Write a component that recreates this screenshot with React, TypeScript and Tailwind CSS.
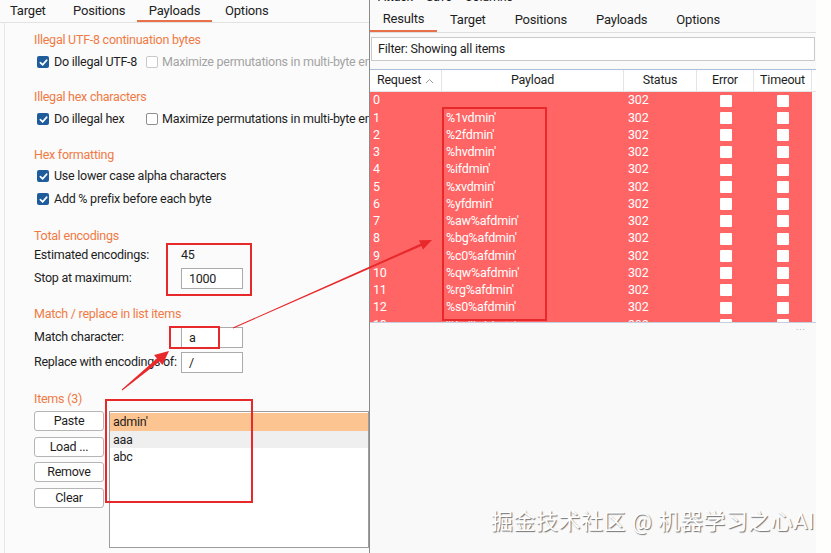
import React from 'react';

const FONT = 'Roboto, "Noto Sans CJK SC", sans-serif';

// Payload rows in the results table (row 13 is cut off at the bottom)
const rows = [
  '',
  "%1vdmin'",
  "%2fdmin'",
  "%hvdmin'",
  "%ifdmin'",
  "%xvdmin'",
  "%yfdmin'",
  "%aw%afdmin'",
  "%bg%afdmin'",
  "%c0%afdmin'",
  "%qw%afdmin'",
  "%rg%afdmin'",
  "%s0%afdmin'",
  "%tw%afdmin'",
];

const Check = ({ checked, disabled }: { checked?: boolean; disabled?: boolean }) =>
  checked ? (
    <div className="w-[12px] h-[12px] rounded-[2px] bg-[#1f5c9c] flex items-center justify-center shrink-0">
      <svg width="9" height="9" viewBox="0 0 10 10">
        <path d="M1.5 5.2 L4 7.6 L8.6 2.4" stroke="white" strokeWidth="1.8" fill="none" strokeLinecap="round" strokeLinejoin="round" />
      </svg>
    </div>
  ) : (
    <div
      className={`w-[12px] h-[12px] rounded-[2px] border bg-white shrink-0 ${
        disabled ? 'border-[#c9c9c9]' : 'border-[#8f8f8f]'
      }`}
    />
  );

const Heading = ({ children, mt }: { children: React.ReactNode; mt: string }) => (
  <div className={`${mt} h-[18px] leading-[18px] text-[12.5px] text-[#f07a45]`}>{children}</div>
);

const Field = ({ value }: { value: string }) => (
  <div className="w-[62px] h-[21px] shrink-0 border border-[#ababab] bg-white px-[7px] leading-[19px] text-[#222]">
    {value}
  </div>
);

// tapered arrow as one polygon: thin at the tail, arrow head at the tip
const arrow = (x1: number, y1: number, x2: number, y2: number, w0: number, w1: number, hl: number, hw: number) => {
  const dx = x2 - x1;
  const dy = y2 - y1;
  const len = Math.hypot(dx, dy);
  const ux = dx / len;
  const uy = dy / len;
  const nx = -uy;
  const ny = ux;
  const bx = x2 - ux * hl;
  const by = y2 - uy * hl;
  const p = [
    [x1 + nx * w0 / 2, y1 + ny * w0 / 2],
    [bx + nx * w1 / 2, by + ny * w1 / 2],
    [bx + nx * hw, by + ny * hw],
    [x2, y2],
    [bx - nx * hw, by - ny * hw],
    [bx - nx * w1 / 2, by - ny * w1 / 2],
    [x1 - nx * w0 / 2, y1 - ny * w0 / 2],
  ];
  return p.map((q) => q.map((v) => v.toFixed(1)).join(',')).join(' ');
};

const LeftPane = () => (
  <div className="w-[369px] shrink-0 bg-[#fbfbfb] flex flex-col">
    {/* Tabs */}
    <div className="h-[23px] flex items-stretch border-b border-[#e2e2e2] text-[13px] tracking-[-0.2px] text-[#222]">
      <div className="w-[62px] pl-[10px] leading-[21px]">Target</div>
      <div className="w-[75px] pl-[11px] leading-[21px]">Positions</div>
      <div className="w-[75px] text-center leading-[21px] border-b-2 border-[#e8704a]">Payloads</div>
      <div className="pl-[13px] leading-[21px]">Options</div>
    </div>

    <div className="flex-1 ml-[4px] border-l border-[#e6e6e6] pl-[29px] text-[12.5px] tracking-[-0.25px] text-[#1e1e1e] whitespace-nowrap">
      <Heading mt="mt-[8px]">Illegal UTF-8 continuation bytes</Heading>
      <div className="mt-[3px] h-[20px] flex items-center overflow-hidden">
        <div className="w-[112px] shrink-0 pl-[3px] flex items-center gap-[5px]">
          <Check checked />
          <span>Do illegal UTF-8</span>
        </div>
        <div className="flex items-center gap-[4px] text-[#a3a3a3]">
          <Check disabled />
          <span>Maximize permutations in multi-byte encodings</span>
        </div>
      </div>

      <Heading mt="mt-[16px]">Illegal hex characters</Heading>
      <div className="mt-[3px] h-[20px] flex items-center overflow-hidden">
        <div className="w-[112px] shrink-0 pl-[3px] flex items-center gap-[5px]">
          <Check checked />
          <span>Do illegal hex</span>
        </div>
        <div className="flex items-center gap-[4px]">
          <Check />
          <span>Maximize permutations in multi-byte encodings</span>
        </div>
      </div>

      <Heading mt="mt-[17px]">Hex formatting</Heading>
      <div className="mt-[2px] h-[20px] pl-[3px] flex items-center gap-[5px]">
        <Check checked />
        <span>Use lower case alpha characters</span>
      </div>
      <div className="mt-[3px] h-[20px] pl-[3px] flex items-center gap-[5px]">
        <Check checked />
        <span>Add % prefix before each byte</span>
      </div>

      <Heading mt="mt-[18px]">Total encodings</Heading>
      <div className="h-[20px] flex items-center">
        <span className="w-[147px] shrink-0">Estimated encodings:</span>
        <span>45</span>
      </div>
      <div className="mt-[3px] h-[21px] flex items-center">
        <span className="w-[147px] shrink-0">Stop at maximum:</span>
        <Field value="1000" />
      </div>

      <Heading mt="mt-[16px]">Match / replace in list items</Heading>
      <div className="mt-[4px] h-[21px] flex items-center">
        <span className="w-[147px] shrink-0">Match character:</span>
        <Field value="a" />
      </div>
      <div className="mt-[4px] h-[21px] flex items-center">
        <span className="w-[147px] shrink-0">Replace with encodings of:</span>
        <Field value="/" />
      </div>

      <Heading mt="mt-[17px]">Items (3)</Heading>
      <div className="mt-[3px] flex gap-[5px]">
        <div className="w-[70px] flex flex-col gap-[5.5px] shrink-0">
          {['Paste', 'Load ...', 'Remove', 'Clear'].map((b) => (
            <div
              key={b}
              className="h-[20px] rounded-[3px] border border-[#b5b5b5] bg-white text-center leading-[18px]"
            >
              {b}
            </div>
          ))}
        </div>
        <div className="flex-1 h-[137px] border border-[#9d9d9d] bg-white pt-[1px]">
          <div className="h-[18px] leading-[18px] pl-[3px] bg-[#fcc491]">admin'</div>
          <div className="h-[17px] leading-[17px] pl-[3px] bg-[#efefef]">aaa</div>
          <div className="h-[17px] leading-[17px] pl-[3px]">abc</div>
        </div>
      </div>
    </div>
  </div>
);

const cols = [
  { name: 'Request', w: 'w-[72px]' },
  { name: 'Payload', w: 'w-[182px]' },
  { name: 'Status', w: 'w-[73px]' },
  { name: 'Error', w: 'w-[57px]' },
  { name: 'Timeout', w: 'w-[58px]' },
];

const RightPane = () => (
  <div className="flex-1 flex border-l border-[#8a8a8a] bg-[#fefefd]">
    <div className="w-[446px] flex flex-col bg-[#fafafa] text-[12.5px] tracking-[-0.2px] text-[#1e1e1e] whitespace-nowrap">
      {/* menu bar, mostly scrolled out of view */}
      <div className="h-[6px] overflow-hidden">
        <div className="-mt-[11px] h-[16px] flex leading-[16px]">
          <span className="ml-[8px]">Attack</span>
          <span className="ml-[13px]">Save</span>
          <span className="ml-[13px]">Columns</span>
        </div>
      </div>

      {/* Tabs */}
      <div className="h-[27px] flex items-stretch border-b border-[#dedede] text-[13px]">
        <div className="w-[67px] text-center leading-[25px] border-b-2 border-[#e8704a]">Results</div>
        <div className="ml-[13px] leading-[27px]">Target</div>
        <div className="ml-[29px] leading-[27px]">Positions</div>
        <div className="ml-[29px] leading-[27px]">Payloads</div>
        <div className="ml-[29px] leading-[27px]">Options</div>
      </div>

      {/* Filter */}
      <div className="mt-[4px] mx-[1px] h-[24px] border border-[#cacaca] bg-white pl-[6px] leading-[22px]">
        Filter: Showing all items
      </div>

      {/* Table */}
      <div className="mt-[8px] border-t border-[#aac0da] h-[253px] overflow-hidden">
        <div className="h-[22px] flex bg-white border-b border-[#e4e4e4]">
          {cols.map((c, i) => (
            <div
              key={c.name}
              className={`${c.w} flex items-center justify-center border-r border-[#e4e4e4] ${i === 0 ? 'gap-[4px]' : ''}`}
            >
              <span>{c.name}</span>
              {i === 0 && (
                <svg width="9" height="6" viewBox="0 0 9 6">
                  <path d="M1 5 L4.5 1.5 L8 5" stroke="#9a9a9a" strokeWidth="1" fill="none" />
                </svg>
              )}
            </div>
          ))}
        </div>
        <div className="bg-[#ff6565] text-white w-[442px]">
          {rows.map((p, i) => (
            <div key={i} className="h-[17.25px] flex items-center">
              <div className="w-[72px] pl-[3px]">{i}</div>
              <div className="w-[182px] pl-[4px]">{p}</div>
              <div className="w-[73px] pl-[4px]">302</div>
              <div className="w-[57px] flex justify-center">
                <div className="w-[12px] h-[12px] rounded-[1px] bg-white" />
              </div>
              <div className="w-[58px] flex justify-center">
                <div className="w-[12px] h-[12px] rounded-[1px] bg-white" />
              </div>
            </div>
          ))}
        </div>
      </div>

      {/* empty area under the table */}
      <div className="flex-1 border-t border-[#c6cfe0] bg-[#f9f9f9] relative">
        <div className="absolute right-[10px] top-[-2px] text-[9px] tracking-[1px] text-[#9a9a9a]">...</div>
      </div>
    </div>
  </div>
);

export default function App() {
  return (
    <div className="w-[831px] h-[553px] overflow-hidden relative flex bg-white" style={{ fontFamily: FONT }}>
      <LeftPane />
      <RightPane />

      {/* red annotations drawn over the screenshot */}
      <svg className="absolute inset-0 pointer-events-none" width="831" height="553" viewBox="0 0 831 553">
        <g fill="none" stroke="#e8292c" strokeWidth="2">
          <rect x="167" y="244" width="84" height="51" />
          <rect x="170" y="327" width="49" height="21" />
          <rect x="106" y="400" width="146" height="102" />
          <rect x="443" y="108" width="103" height="212" />
        </g>
        <polygon fill="#e8292c" points={arrow(233, 328, 432, 240, 0.8, 2.2, 12, 5)} />
        <polygon fill="#e8292c" points={arrow(122, 390, 169, 351, 1, 4, 14, 6.5)} />
      </svg>

      {/* site watermark */}
      <div className="absolute left-[491px] top-[507px] text-[22px] leading-[30px] tracking-[0.5px] text-white whitespace-nowrap [text-shadow:1px_1px_1px_rgba(0,0,0,0.55)]">
        掘金技术社区 @ 机器学习之心AI
      </div>
    </div>
  );
}
